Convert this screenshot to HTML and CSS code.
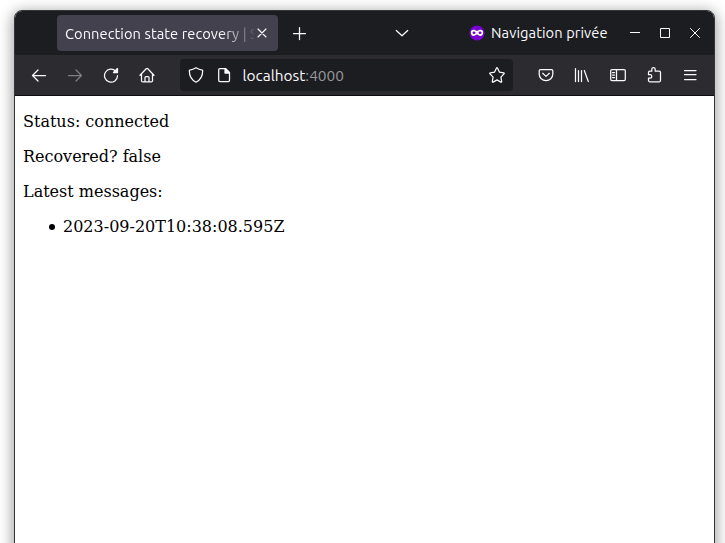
FILE: index.html
```html
<!DOCTYPE html>
<html lang="fr">
<head>
<meta charset="utf-8">
<title>Connection state recovery</title>
<link rel="stylesheet" href="styles.css">
</head>
<body>
<div class="window">
  <header class="titlebar">
    <div class="tab">
      <span class="tab-title">Connection state recovery | S</span>
      <svg class="tab-close" width="16" height="16" viewBox="0 0 16 16"><path d="M4 4l8 8M12 4l-8 8"/></svg>
    </div>
    <svg class="new-tab" width="16" height="16" viewBox="0 0 16 16"><path d="M8.500 2.500v12M2.500 8.500h12"/></svg>
    <svg class="all-tabs" width="16" height="16" viewBox="0 0 16 16"><path d="M2.300 5.500l5.700 5.300 5.700-5.300"/></svg>
    <div class="private">
      <svg class="mask" width="16" height="16" viewBox="0 0 16 16"><circle cx="8" cy="8" r="7.500"/><path d="M8 6.200C7 5.200 5.700 4.700 4.300 4.700 2.700 4.700 1.800 5.900 1.800 7.400 1.800 9.500 3 10.900 4.500 10.900 6 10.900 7 9.400 8 9.400s2 1.500 3.500 1.500C13 10.900 14.200 9.500 14.200 7.400c0-1.500-.9-2.700-2.500-2.700C10.300 4.700 9 5.200 8 6.200z"/><ellipse cx="5" cy="7.800" rx="1.500" ry="1.200"/><ellipse cx="11" cy="7.800" rx="1.500" ry="1.200"/></svg>
      <span class="private-label">Navigation privée</span>
    </div>
    <div class="controls">
      <svg width="30" height="16" viewBox="0 0 30 16"><path d="M10 7.500h10"/></svg>
      <svg width="30" height="16" viewBox="0 0 30 16"><path d="M10.500 3.500h9v9h-9z"/></svg>
      <svg width="30" height="16" viewBox="0 0 30 16"><path d="M10.200 3.200l9.600 9.600M19.800 3.200l-9.600 9.600"/></svg>
    </div>
  </header>
  <nav class="toolbar">
    <svg class="tool" viewBox="0 0 16 16"><path d="M14.500 8.500H1.500M7 3L1.500 8.500 7 14"/></svg>
    <svg class="tool disabled" viewBox="0 0 16 16"><path d="M1.500 8.500h13M9 3L14.500 8.500 9 14"/></svg>
    <svg class="tool" viewBox="0 0 16 16"><path d="M12.800 4.300A6.500 6.500 0 1 0 14.500 8.700"/><path class="solid" d="M10.500 5.500h4V1.500z"/></svg>
    <svg class="tool" viewBox="0 0 16 16"><path d="M1 8.300l6.200-6.500q.8-.8 1.600 0L15 8.300M2.500 7v6.700q0 1.200 1.200 1.200h8.600q1.200 0 1.200-1.200V7M6 14.700v-4.200q0-1 1-1h2q1 0 1 1v4.200"/></svg>
    <div class="address">
      <svg width="16" height="16" viewBox="0 0 16 16"><path d="M8 .8q2.900 1.800 6.300 2.300.4.100.4.500c0 5.700-2.400 9.600-6.700 11.600C3.700 13.200 1.300 9.300 1.300 3.600q0-.4.4-.5Q5.100 2.600 8 .8z"/></svg>
      <svg class="doc" width="16" height="16" viewBox="0 0 16 16"><path d="M9.500 1.500H4Q2.700 1.500 2.700 2.800v10.400q0 1.300 1.300 1.300h8.200q1.300 0 1.300-1.300V5.500z"/><path class="solid" d="M9 1.500v4.500h4.500z"/></svg>
      <span class="url">localhost<span class="port">:4000</span></span>
      <svg class="star" width="16" height="16" viewBox="0 0 16 16"><path d="M7.400 1.200q.6-1 1.200 0l1.900 4 4.100.6q1 .3.400 1.100l-3.100 3.200.8 4.400q0 1-.9.600L8 12.900l-3.800 2.200q-.9.400-.9-.6l.8-4.400L1 6.900q-.6-.8.400-1.100l4.100-.6z"/></svg>
    </div>
    <svg class="tool" viewBox="0 0 16 16"><path d="M2.500 2.500h11q1.300 0 1.300 1.300v3.400a6.800 6.500 0 0 1-13.600 0V3.800q0-1.300 1.300-1.300zM4.700 6.300L8 9.400l3.300-3.100"/></svg>
    <svg class="tool" viewBox="0 0 16 16"><path d="M1.500 1.500v13M4.500 3.500v11M7.500 3.500v11M10.300 3.500l4 11"/></svg>
    <svg class="tool" viewBox="0 0 16 16"><path d="M2 2.500h12q1.300 0 1.300 1.300v8.400q0 1.300-1.300 1.300H2Q.7 13.500.7 12.200V3.800Q.7 2.500 2 2.500zM6.500 2.500v11M2.500 5.500h2M2.500 8h2M2.500 10.500h2"/></svg>
    <svg class="tool" viewBox="0 0 16 16"><path d="M5.800 4.200V2.300a1.700 1.700 0 0 1 3.400 0v1.900h4q1.300 0 1.300 1.200v8.200q0 1.200-1.200 1.200H3.700q-1.200 0-1.200-1.200v-2.500h1.600a1.700 1.700 0 0 0 0-3.400H2.500V5.400q0-1.200 1.200-1.200z"/></svg>
    <svg class="tool" viewBox="0 0 16 16"><path d="M2.500 3.500h11.500M2.500 7.500h11.500M2.500 12.500h11.500"/></svg>
  </nav>
  <main class="page">
    <p>Status: connected</p>
    <p>Recovered? false</p>
    <p>Latest messages:</p>
    <ul><li>2023-09-20T10:38:08.595Z</li></ul>
  </main>
</div>
</body>
</html>
```
FILE: styles.css
```css
* {
  box-sizing: border-box;
}

body {
  margin: 0;
  height: 543px;
  padding: 10px 10px 0 14px;
  overflow: hidden;
  background: #fff;
}

.window {
  width: 701px;
  height: 560px;
  border: 1px solid #35363b;
  border-radius: 8px 8px 0 0;
  background: #fff;
  box-shadow: 0 3px 14px 2px rgba(0, 0, 0, .36);
  overflow: hidden;
  font-family: Ubuntu, "Noto Sans", sans-serif;
  font-size: 14.67px;
  color: #fbfbfe;
}

svg {
  display: block;
  flex: none;
  fill: none;
  stroke: #fbfbfe;
  stroke-width: 1.25;
  stroke-linecap: round;
  stroke-linejoin: round;
}

.titlebar {
  height: 44px;
  padding: 4px 4px 4px 42px;
  display: flex;
  align-items: center;
  background: #1c1d21;
}

.tab {
  width: 221px;
  height: 36px;
  padding: 0 8px;
  display: flex;
  align-items: center;
  border-radius: 4px;
  background: #42414d;
}

.tab-title {
  width: 189px;
  flex: none;
  white-space: nowrap;
  letter-spacing: .06px;
  mask-image: linear-gradient(to right, #000 155px, transparent 193px);
}

.tab-close {
  stroke-width: 1.1;
}

.new-tab {
  margin-left: 13px;
}

.all-tabs {
  margin-left: 87px;
}

.private {
  margin-left: 59px;
  width: 151px;
  display: flex;
  align-items: center;
  gap: 6px;
}

.mask circle {
  fill: #7a00d0;
  stroke: none;
}

.mask path {
  fill: #fff;
  stroke: none;
}

.mask ellipse {
  fill: #7a00d0;
  stroke: none;
}

.private-label {
  margin-top: -2px;
  white-space: nowrap;
  letter-spacing: .08px;
}

.controls {
  display: flex;
}

.controls svg {
  stroke-width: 1;
  stroke-linecap: butt;
  stroke-linejoin: miter;
}

.toolbar {
  height: 41px;
  padding: 0 6px;
  display: flex;
  align-items: center;
  background: #2b2b30;
  border-bottom: 1px solid #0c0c0d;
}

.tool {
  width: 16px;
  height: 16px;
  margin: 0 10px;
}

.disabled {
  opacity: .4;
}

.solid {
  fill: #fbfbfe;
}

.address {
  flex: none;
  width: 333px;
  height: 32px;
  margin: 0 15px;
  padding: 0 8px;
  display: flex;
  align-items: center;
  border-radius: 4px;
  background: #1c1d21;
}

.doc {
  margin-left: 12px;
}

.url {
  margin-left: 10.5px;
  white-space: nowrap;
  font-size: 15.45px;
}

.port {
  color: #98989d;
}

.star {
  margin-left: auto;
}

.page {
  padding: 0 8px;
  overflow: hidden;
  color: #000;
  font: 16px/19px "DejaVu Serif", serif;
}

.page p,
.page ul {
  margin: 16px 0;
}

.page ul {
  padding-left: 40px;
  list-style: none;
}

.page li {
  display: flex;
  align-items: center;
}

.page li::before {
  content: "";
  width: 6px;
  height: 6px;
  margin: 1px 8px 0 -14px;
  border-radius: 50%;
  background: #000;
}
```
